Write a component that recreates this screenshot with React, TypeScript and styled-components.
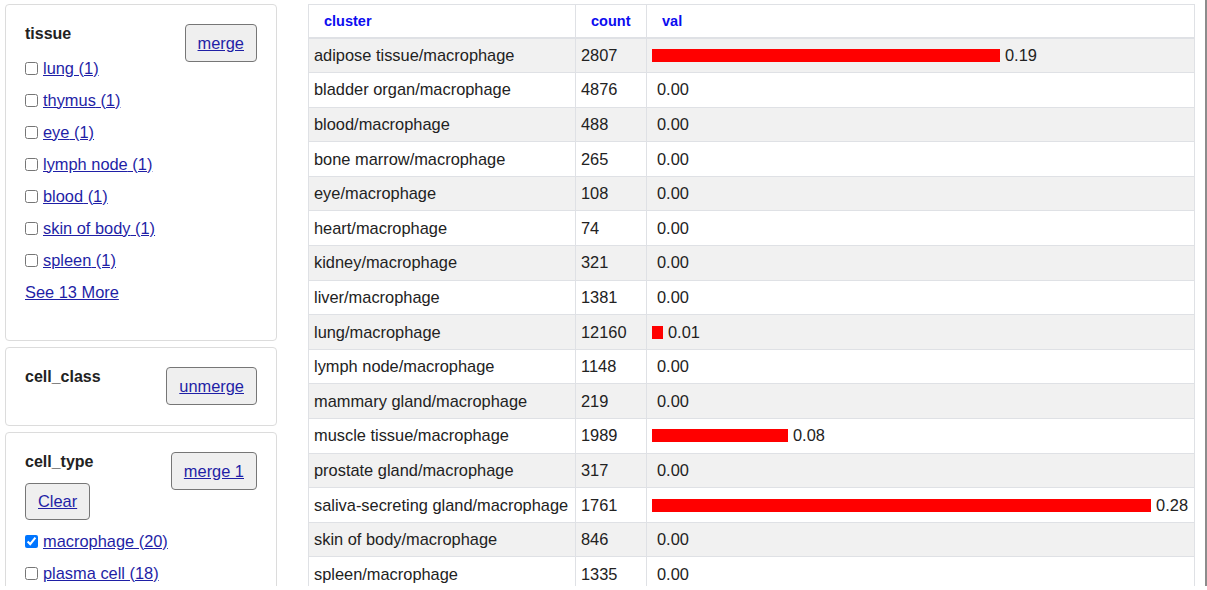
import React from 'react';
import styled, { createGlobalStyle } from 'styled-components';

const GlobalStyle = createGlobalStyle`
  html, body {
    margin: 0;
    padding: 0;
    background: #fff;
    font-family: "Liberation Sans", Arial, Helvetica, sans-serif;
    color: #222;
  }
`;

const Page = styled.div`
  display: flex;
  align-items: flex-start;
  gap: 31px;
  padding: 4px 0 0 5px;
  height: 586px;
  overflow: hidden;
  border-right: 2px solid #8c8c8c;
  box-sizing: border-box;
  width: 1207px;
`;

const Sidebar = styled.div`
  width: 272px;
  flex: none;
  display: flex;
  flex-direction: column;
  gap: 6px;
`;

const Panel = styled.div`
  display: flow-root;
  border: 1px solid #dcdcdc;
  border-radius: 4px;
  padding: 19px 19px 20px 19px;
`;

const PanelTitle = styled.div`
  font-size: 16px;
  line-height: 20px;
  font-weight: 700;
  color: #222;
  margin-bottom: 13px;
`;

const Button = styled.button<{ $float?: boolean }>`
  float: ${p => (p.$float ? 'right' : 'none')};
  display: block;
  height: 38px;
  padding: 0 12px;
  background: #efefef;
  border: 1px solid #767676;
  border-radius: 4px;
  font-family: inherit;
  font-size: 16.4px;
  color: #1f1fa6;
  text-decoration: underline;
  cursor: pointer;
  margin: 0 0 0 8px;
`;

const ClearButton = styled(Button)`
  height: 37px;
  margin: -2px 0 10px 0;
`;

const Item = styled.label`
  display: flex;
  align-items: center;
  height: 22px;
  margin-bottom: 10px;
  font-size: 16.4px;

  input {
    width: 13px;
    height: 13px;
    margin: 0 5px 0 0;
  }
`;

const Link = styled.a`
  color: #1f1fa6;
  text-decoration: underline;
  cursor: pointer;
`;

const SeeMore = styled(Link)`
  display: block;
  font-size: 16.4px;
  line-height: 22px;
  margin-bottom: 17px;
`;

const Table = styled.table`
  width: 887px;
  flex: none;
  border-collapse: collapse;
  border: 1px solid #dfe1e5;
  font-size: 16.4px;
  table-layout: fixed;
`;

const Th = styled.th<{ $w?: number }>`
  box-sizing: border-box;
  width: ${p => (p.$w ? `${p.$w}px` : 'auto')};
  text-align: left;
  font-size: 14.5px;
  font-weight: 700;
  color: #0c0cf0;
  height: 33px;
  padding: 0 0 0 15px;
  border-right: 1px solid #dfe1e5;
  border-bottom: 2px solid #dfe1e5;
`;

const Row = styled.tr<{ $odd: boolean }>`
  background: ${p => (p.$odd ? '#f1f1f1' : '#fff')};
`;

const Td = styled.td`
  height: 33.6px;
  padding: 0 6px 0 5px;
  border: 1px solid #dfe1e5;
  white-space: nowrap;
  color: #222;
`;

const ValCell = styled.div`
  display: flex;
  align-items: center;
`;

const Bar = styled.div`
  height: 13px;
  background: #ff0000;
  margin-right: 5px;
`;

const tissues = ['lung', 'thymus', 'eye', 'lymph node', 'blood', 'skin of body', 'spleen'];

const rows: [string, number, string, number][] = [
  ['adipose tissue/macrophage', 2807, '0.19', 348],
  ['bladder organ/macrophage', 4876, '0.00', 0],
  ['blood/macrophage', 488, '0.00', 0],
  ['bone marrow/macrophage', 265, '0.00', 0],
  ['eye/macrophage', 108, '0.00', 0],
  ['heart/macrophage', 74, '0.00', 0],
  ['kidney/macrophage', 321, '0.00', 0],
  ['liver/macrophage', 1381, '0.00', 0],
  ['lung/macrophage', 12160, '0.01', 11],
  ['lymph node/macrophage', 1148, '0.00', 0],
  ['mammary gland/macrophage', 219, '0.00', 0],
  ['muscle tissue/macrophage', 1989, '0.08', 136],
  ['prostate gland/macrophage', 317, '0.00', 0],
  ['saliva-secreting gland/macrophage', 1761, '0.28', 500],
  ['skin of body/macrophage', 846, '0.00', 0],
  ['spleen/macrophage', 1335, '0.00', 0],
];

export default function App() {
  return (
    <>
      <GlobalStyle />
      <Page>
        <Sidebar>
          <Panel>
            <Button $float>merge</Button>
            <PanelTitle>tissue</PanelTitle>
            {tissues.map(t => (
              <Item key={t}>
                <input type="checkbox" />
                <Link>{t} (1)</Link>
              </Item>
            ))}
            <SeeMore>See 13 More</SeeMore>
          </Panel>
          <Panel>
            <Button $float>unmerge</Button>
            <PanelTitle>cell_class</PanelTitle>
          </Panel>
          <Panel>
            <Button $float>merge 1</Button>
            <PanelTitle>cell_type</PanelTitle>
            <ClearButton>Clear</ClearButton>
            <Item>
              <input type="checkbox" defaultChecked />
              <Link>macrophage (20)</Link>
            </Item>
            <Item>
              <input type="checkbox" />
              <Link>plasma cell (18)</Link>
            </Item>
          </Panel>
        </Sidebar>
        <Table>
          <thead>
            <tr>
              <Th $w={267}>cluster</Th>
              <Th $w={71}>count</Th>
              <Th>val</Th>
            </tr>
          </thead>
          <tbody>
            {rows.map(([name, count, val, w], i) => (
              <Row key={name} $odd={i % 2 === 0}>
                <Td>{name}</Td>
                <Td>{count}</Td>
                <Td>
                  <ValCell>
                    <Bar style={{ width: w }} />
                    {val}
                  </ValCell>
                </Td>
              </Row>
            ))}
          </tbody>
        </Table>
      </Page>
    </>
  );
}
